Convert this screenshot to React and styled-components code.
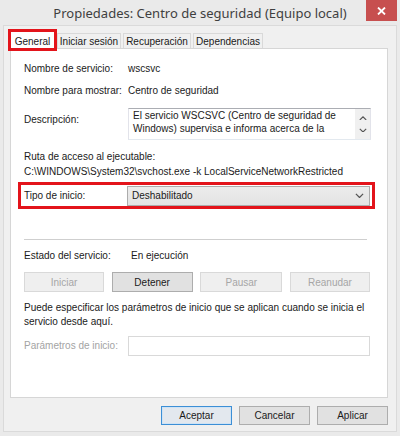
import React from "react";
import styled, { createGlobalStyle, css } from "styled-components";

const Global = createGlobalStyle`
  html, body { margin: 0; padding: 0; background: #eaeaea; }
  body {
    font-family: "Liberation Sans", Arial, sans-serif;
    font-size: 10px;
    color: #1a1a1a;
  }
  * { box-sizing: border-box; }
`;

const Window = styled.div`
  width: 400px;
  height: 436px;
  background: #eaeaea;
  display: flex;
  flex-direction: column;
  overflow: hidden;
`;

const TitleBar = styled.div`
  height: 25px;
  flex: none;
  display: grid;
  grid-template-columns: 36px 1fr 36px;
  align-items: start;
`;

const Title = styled.div`
  grid-column: 2;
  text-align: center;
  font-family: "Noto Sans", "Open Sans", sans-serif;
  font-size: 13px;
  color: #3f3f3f;
  line-height: 26px;
  white-space: nowrap;
`;

const CloseButton = styled.div`
  grid-column: 3;
  justify-self: end;
  margin-right: 3px;
  width: 31px;
  height: 21px;
  background: #c74f4f;
  display: flex;
  align-items: center;
  justify-content: center;
`;

const Client = styled.div`
  flex: 1;
  margin: 0 3px 4px 3px;
  border: 1px solid #dadada;
  background: #f0f0f0;
  padding: 3px 8px 0 6px;
  display: flex;
  flex-direction: column;
`;

const TabStrip = styled.div`
  display: flex;
  align-items: flex-end;
  gap: 2px;
  height: 20px;
  margin-bottom: -1px;
  position: relative;
  z-index: 1;
`;

const Tab = styled.div`
  width: ${(p) => p.$w}px;
  height: 15px;
  margin-bottom: 1px;
  border: 1px solid #d9d9d9;
  border-bottom: none;
  background: #f0f0f0;
  display: flex;
  align-items: center;
  justify-content: center;
  white-space: nowrap;
  ${(p) =>
    p.$active &&
    css`
      height: 18px;
      margin-bottom: 0;
      background: #fff;
      outline: 3px solid #e3141b;
      outline-offset: -1px;
      padding-top: 2px;
    `}
`;

const Panel = styled.div`
  height: 350px;
  flex: none;
  border: 1px solid #d6d6d6;
  background: #fff;
  padding: 13px 17px 0 13px;
  display: flex;
  flex-direction: column;
`;

const Row = styled.div`
  display: flex;
  align-items: ${(p) => (p.$top ? "flex-start" : "center")};
  min-height: 14px;
  line-height: 14px;
  margin-top: ${(p) => p.$mt || 0}px;
  white-space: nowrap;
`;

const Label = styled.div`
  width: ${(p) => p.$w || 104}px;
  flex: none;
  padding-top: ${(p) => p.$pt || 0}px;
  color: ${(p) => (p.$disabled ? "#a3a3a3" : "inherit")};
`;

const Value = styled.div`
  padding-left: ${(p) => p.$pl || 0}px;
`;

const DescBox = styled.div`
  width: 243px;
  height: 32px;
  margin-right: -2px;
  border: 1px solid;
  border-color: #abadb3 #e2e3ea #e3e9ef #e2e3ea;
  display: flex;
  overflow: hidden;
`;

const DescText = styled.div`
  flex: 1;
  padding: 1px 4px;
  line-height: 12.5px;
  white-space: nowrap;
  overflow: hidden;
`;

const ScrollBar = styled.div`
  width: 15px;
  flex: none;
  background: #f0f0f0;
  display: flex;
  flex-direction: column;
  align-items: center;
  justify-content: space-around;
  padding: 3px 0;
`;

const Block = styled.div`
  line-height: 14px;
  margin-top: ${(p) => p.$mt || 0}px;
  white-space: nowrap;
`;

const Highlight = styled.div`
  margin: 3px -5px 0 -6px;
  height: 27px;
  border: 3px solid #e3141b;
  padding: 0 2px 0 3px;
  display: flex;
  align-items: center;
  white-space: nowrap;
`;

const Combo = styled.div`
  flex: 1;
  height: 20px;
  border: 1px solid #acacac;
  background: linear-gradient(#ececec, #e3e3e3);
  display: flex;
  align-items: center;
  justify-content: space-between;
  padding: 0 5px 0 4px;
`;

const Separator = styled.div`
  height: 1px;
  background: #cfcfcf;
  margin: 30px 3px 0 0;
`;

const ButtonRow = styled.div`
  display: flex;
  justify-content: space-between;
  margin-top: ${(p) => p.$mt || 0}px;
`;

const Button = styled.button`
  width: ${(p) => p.$w}px;
  height: ${(p) => p.$h || 20}px;
  padding: 0;
  font-family: inherit;
  font-size: 10px;
  color: #1a1a1a;
  background: #e1e1e1;
  border: 1px solid ${(p) => (p.$default ? "#3c8fd6" : "#adadad")};
  ${(p) =>
    p.$default &&
    css`
      box-shadow: inset 0 0 0 1px #cfe3f5;
      background: #e3e8ee;
    `}
  &:disabled {
    color: #a6a6a6;
    background: #efefef;
    border-color: #d9d9d9;
  }
`;

const Input = styled.div`
  flex: 1;
  height: 20px;
  border: 1px solid #d9d9d9;
  background: #fff;
`;

const Footer = styled.div`
  display: flex;
  justify-content: flex-end;
  gap: 7px;
  margin-top: 8px;
`;

const Chevron = ({ up, size = 8 }) => (
  <svg width={size} height={size * 0.6} viewBox="0 0 10 6">
    <path
      d={up ? "M1 5 L5 1 L9 5" : "M1 1 L5 5 L9 1"}
      fill="none"
      stroke="#555"
      strokeWidth="1.4"
    />
  </svg>
);

export default function App() {
  return (
    <>
      <Global />
      <Window>
        <TitleBar>
          <Title>Propiedades: Centro de seguridad (Equipo local)</Title>
          <CloseButton>
            <svg width="9" height="8" viewBox="0 0 9 8">
              <path d="M1 0.5 L8 7.5 M8 0.5 L1 7.5" stroke="#fff" strokeWidth="1.8" />
            </svg>
          </CloseButton>
        </TitleBar>
        <Client>
          <TabStrip>
            <Tab $w={45} $active>General</Tab>
            <Tab $w={64}>Iniciar sesión</Tab>
            <Tab $w={68}>Recuperación</Tab>
            <Tab $w={70}>Dependencias</Tab>
          </TabStrip>
          <Panel>
            <Row>
              <Label>Nombre de servicio:</Label>
              <Value>wscsvc</Value>
            </Row>
            <Row $mt={8}>
              <Label>Nombre para mostrar:</Label>
              <Value>Centro de seguridad</Value>
            </Row>
            <Row $mt={10} $top>
              <Label $pt={5}>Descripción:</Label>
              <DescBox>
                <DescText>
                  El servicio WSCSVC (Centro de seguridad de
                  <br />
                  Windows) supervisa e informa acerca de la
                </DescText>
                <ScrollBar>
                  <Chevron up />
                  <Chevron />
                </ScrollBar>
              </DescBox>
            </Row>
            <Block $mt={10}>Ruta de acceso al ejecutable:</Block>
            <Block $mt={1}>
              C:\WINDOWS\System32\svchost.exe -k LocalServiceNetworkRestricted
            </Block>
            <Highlight>
              <Label $w={103}>Tipo de inicio:</Label>
              <Combo>
                <span>Deshabilitado</span>
                <Chevron size={9} />
              </Combo>
            </Highlight>
            <Separator />
            <Row $mt={9}>
              <Label>Estado del servicio:</Label>
              <Value $pl={3}>En ejecución</Value>
            </Row>
            <ButtonRow $mt={9}>
              <Button $w={80} disabled>Iniciar</Button>
              <Button $w={81}>Detener</Button>
              <Button $w={82} disabled>Pausar</Button>
              <Button $w={80} disabled>Reanudar</Button>
            </ButtonRow>
            <Block $mt={9}>
              Puede especificar los parámetros de inicio que se aplican cuando se inicia el
              <br />
              servicio desde aquí.
            </Block>
            <Row $mt={7}>
              <Label $disabled>Parámetros de inicio:</Label>
              <Input />
            </Row>
          </Panel>
          <Footer>
            <Button $w={71} $h={19} $default>Aceptar</Button>
            <Button $w={71} $h={19}>Cancelar</Button>
            <Button $w={71} $h={19}>Aplicar</Button>
          </Footer>
        </Client>
      </Window>
    </>
  );
}
